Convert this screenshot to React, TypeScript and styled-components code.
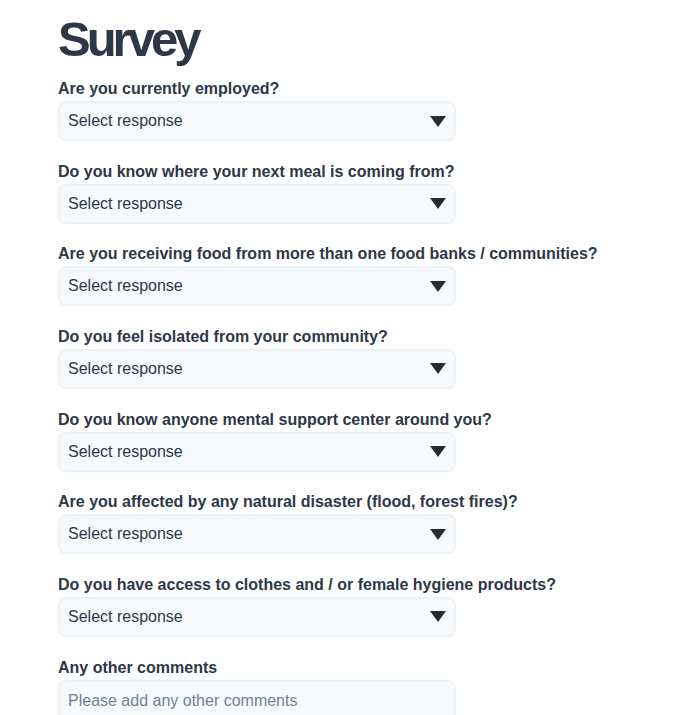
import React from "react";
import styled, { createGlobalStyle } from "styled-components";

const GlobalStyle = createGlobalStyle`
  html, body { margin: 0; padding: 0; background: #ffffff; }
  body { font-family: "Liberation Sans", Arial, Helvetica, sans-serif; color: #2d3748; }
  * { box-sizing: border-box; }
`;

const Page = styled.main`
  padding: 13px 0 0 58px;
`;

const Title = styled.h1`
  margin: 0 0 13px 0;
  font-size: 49px;
  line-height: 52px;
  font-weight: 700;
  letter-spacing: -4px;
  color: #2d3748;
`;

const Field = styled.div`
  display: flex;
  flex-direction: column;
  align-items: flex-start;
  gap: 1px;
  margin-bottom: 19.67px;
`;

const Label = styled.label`
  font-size: 16px;
  line-height: 22px;
  font-weight: 700;
  color: #2d3748;
  white-space: nowrap;
`;

const SelectBox = styled.div`
  display: flex;
  align-items: center;
  height: 40px;
  width: 398px;
  padding: 0 8px 0 8px;
  background: #f7fafc;
  border: 2px solid #edf2f7;
  border-radius: 8px;
  font-size: 16px;
  color: #2d3748;
`;

const SelectText = styled.span`
  flex: 1;
`;

const Arrow = styled.svg`
  width: 16px;
  height: 11px;
`;

const TextArea = styled.div`
  height: 60px;
  width: 398px;
  padding: 8px 8px;
  background: #f7fafc;
  border: 2px solid #edf2f7;
  border-radius: 8px;
  font-size: 16px;
  line-height: 22px;
  color: #718096;
`;

const questions = [
  "Are you currently employed?",
  "Do you know where your next meal is coming from?",
  "Are you receiving food from more than one food banks / communities?",
  "Do you feel isolated from your community?",
  "Do you know anyone mental support center around you?",
  "Are you affected by any natural disaster (flood, forest fires)?",
  "Do you have access to clothes and / or female hygiene products?",
];

export default function App() {
  return (
    <>
      <GlobalStyle />
      <Page>
        <Title>Survey</Title>
        {questions.map((q) => (
          <Field key={q}>
            <Label>{q}</Label>
            <SelectBox>
              <SelectText>Select response</SelectText>
              <Arrow viewBox="0 0 16 11">
                <polygon points="0,0 16,0 8,11" fill="#2b2b2b" />
              </Arrow>
            </SelectBox>
          </Field>
        ))}
        <Field>
          <Label>Any other comments</Label>
          <TextArea>Please add any other comments</TextArea>
        </Field>
      </Page>
    </>
  );
}
